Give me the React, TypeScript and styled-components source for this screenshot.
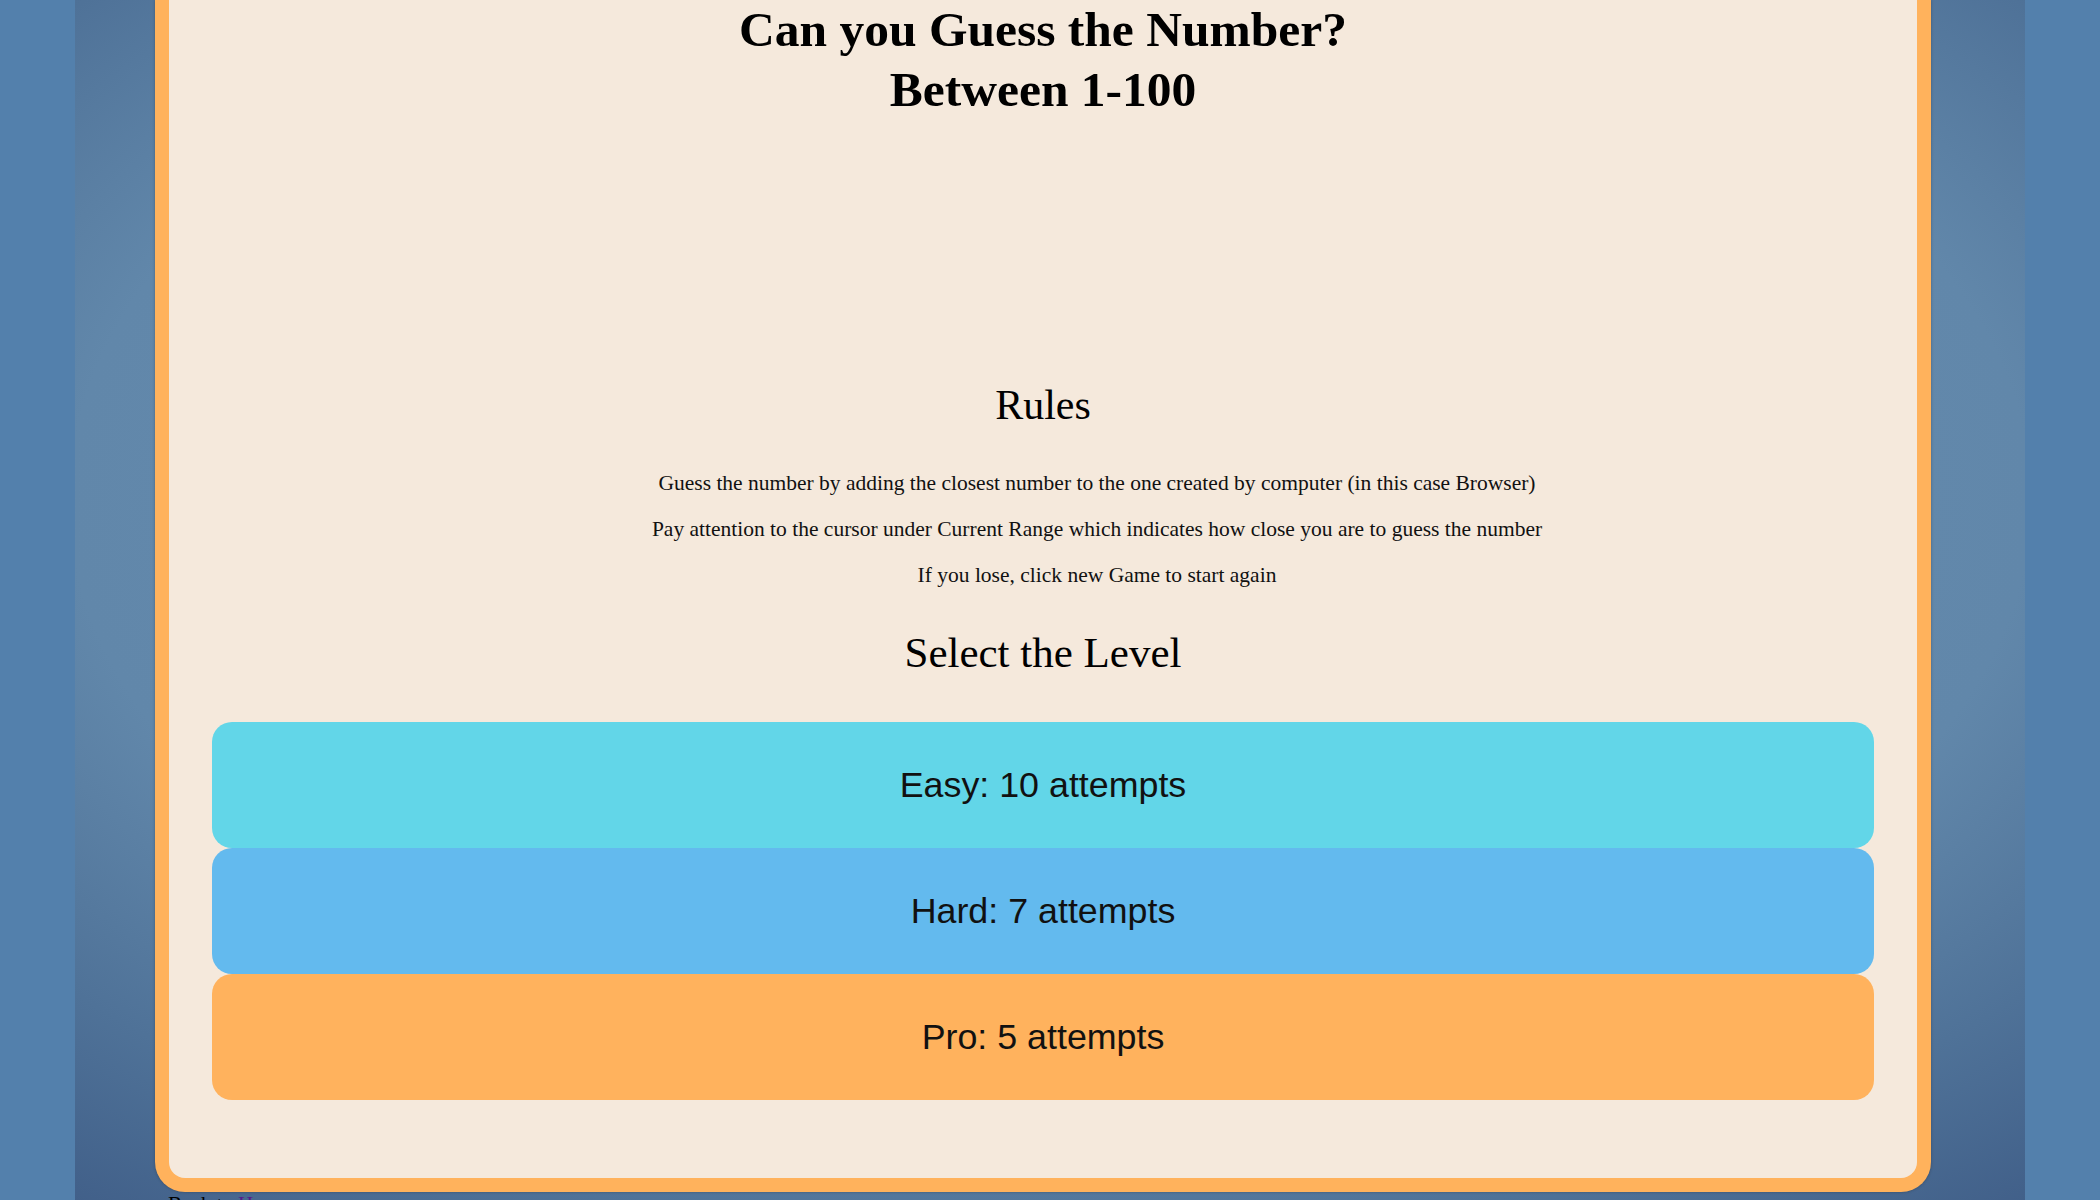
import React from "react";
import styled, { createGlobalStyle } from "styled-components";

const GlobalStyle = createGlobalStyle`
  html, body {
    margin: 0;
    padding: 0;
    background: #5380ac;
    overflow: hidden;
    font-family: "Liberation Serif", "Times New Roman", serif;
    color: #000;
  }
  * { box-sizing: border-box; }
`;

const Page = styled.div`
  width: 1950px;
  min-height: 1200px;
  margin: 0 auto;
  padding: 0 94px 0 80px;
  background: radial-gradient(
    ellipse 1400px 800px at 50% 500px,
    #6a90b3 0%,
    #6187aa 70%,
    #4f7298 93%,
    #3f5d87 115%
  );
`;

const Card = styled.main`
  display: flex;
  flex-direction: column;
  background: #f5e9dc;
  border: 14px solid #ffb25c;
  border-top: none;
  border-radius: 0 0 30px 30px;
  padding: 0 43px 78px 43px;
  box-shadow: 0 0 3px rgba(30, 30, 30, 0.35);
`;

const Title = styled.h1`
  margin: 0;
  font-size: 49.5px;
  line-height: 60px;
  font-weight: 700;
  text-align: center;
`;

const SectionHeading = styled.h2<{ $top: number; $bottom: number; $size: number }>`
  margin: ${(p) => p.$top}px 0 ${(p) => p.$bottom}px;
  font-size: ${(p) => p.$size}px;
  line-height: 48px;
  font-weight: 400;
  text-align: center;
`;

const RulesList = styled.ul`
  list-style: none;
  margin: 0;
  padding: 0 0 0 108px;
  display: flex;
  flex-direction: column;
  gap: 22px;
`;

const Rule = styled.li`
  font-size: 21.5px;
  line-height: 24px;
  text-align: center;
  color: #111;
`;

const LevelList = styled.div`
  display: flex;
  flex-direction: column;
`;

const LevelButton = styled.button<{ $bg: string }>`
  height: 126px;
  width: 100%;
  border: none;
  border-radius: 20px;
  background: ${(p) => p.$bg};
  font-family: "Liberation Sans", Arial, sans-serif;
  font-size: 35.8px;
  color: #111;
  cursor: pointer;
`;

const Footer = styled.p`
  margin: 0;
  padding-left: 13px;
  font-size: 21px;
  line-height: 24px;
`;

const FooterLink = styled.a`
  color: #551a8b;
`;

const levels = [
  { label: "Easy: 10 attempts", bg: "#62d6e8" },
  { label: "Hard: 7 attempts", bg: "#63baee" },
  { label: "Pro: 5 attempts", bg: "#ffb25d" },
];

export default function App() {
  return (
    <>
      <GlobalStyle />
      <Page>
        <Card>
          <Title>
            Can you Guess the Number?
            <br />
            Between 1-100
          </Title>
          <SectionHeading $top={261} $bottom={42} $size={42}>
            Rules
          </SectionHeading>
          <RulesList>
            <Rule>
              Guess the number by adding the closest number to the one created by computer (in this case Browser)
            </Rule>
            <Rule>
              Pay attention to the cursor under Current Range which indicates how close you are to guess the number
            </Rule>
            <Rule>If you lose, click new Game to start again</Rule>
          </RulesList>
          <SectionHeading $top={42} $bottom={45} $size={43}>
            Select the Level
          </SectionHeading>
          <LevelList>
            {levels.map((l) => (
              <LevelButton key={l.label} $bg={l.bg}>
                {l.label}
              </LevelButton>
            ))}
          </LevelList>
        </Card>
        <Footer>
          Back to <FooterLink href="#">Home</FooterLink>
        </Footer>
      </Page>
    </>
  );
}
